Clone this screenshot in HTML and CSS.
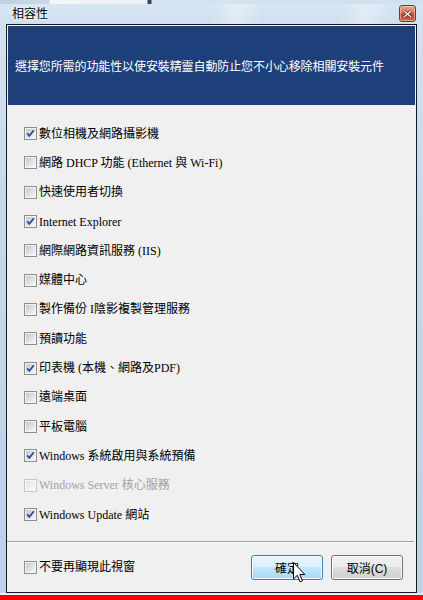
FILE: index.html
```html
<!DOCTYPE html>
<html lang="zh-Hant">
<head>
<meta charset="utf-8">
<title>相容性</title>
<link rel="stylesheet" href="styles.css">
</head>
<body>
<svg class="defs" width="0" height="0" aria-hidden="true">
  <defs>
    <linearGradient id="cbfill" x1="0" y1="0" x2="1" y2="1">
      <stop offset="0" stop-color="#c3c7cd"/>
      <stop offset="1" stop-color="#f8f8f8"/>
    </linearGradient>
    <linearGradient id="cbfilld" x1="0" y1="0" x2="1" y2="1">
      <stop offset="0" stop-color="#e6e6e6"/>
      <stop offset="1" stop-color="#f7f7f7"/>
    </linearGradient>
    <symbol id="box" viewBox="0 0 13 13">
      <rect x="0.5" y="0.5" width="12" height="12" fill="#f4f4f4" stroke="#8e8f8f"/>
      <rect x="2" y="2" width="9" height="9" fill="url(#cbfill)"/>
    </symbol>
    <symbol id="boxd" viewBox="0 0 13 13">
      <rect x="0.5" y="0.5" width="12" height="12" fill="#f7f7f7" stroke="#c8c8c8"/>
      <rect x="2" y="2" width="9" height="9" fill="url(#cbfilld)"/>
    </symbol>
    <symbol id="tick" viewBox="0 0 13 13">
      <path d="M3.2 6.3 L5.4 8.9 L9.8 3.3" fill="none" stroke="#2d4c95" stroke-width="1.8"/>
    </symbol>
  </defs>
</svg>

<div class="window">
  <div class="behind"></div>
  <div class="titlebar">
    <span class="title">相容性</span>
    <span class="close">
      <svg width="9" height="8" viewBox="0 0 9 8"><path d="M1 1 L8 7 M8 1 L1 7" stroke="#3a1a12" stroke-width="2.6"/><path d="M1 1 L8 7 M8 1 L1 7" stroke="#ffffff" stroke-width="1.4"/></svg>
    </span>
  </div>

  <div class="client">
    <div class="banner">選擇您所需的功能性以使安裝精靈自動防止您不小心移除相關安裝元件</div>

    <ul class="list">
      <li class="row"><svg class="cb"><use href="#box"/><use href="#tick"/></svg><span>數位相機及網路攝影機</span></li>
      <li class="row"><svg class="cb"><use href="#box"/></svg><span>網路 DHCP 功能 (Ethernet 與 Wi-Fi)</span></li>
      <li class="row"><svg class="cb"><use href="#box"/></svg><span>快速使用者切換</span></li>
      <li class="row"><svg class="cb"><use href="#box"/><use href="#tick"/></svg><span>Internet Explorer</span></li>
      <li class="row"><svg class="cb"><use href="#box"/></svg><span>網際網路資訊服務 (IIS)</span></li>
      <li class="row"><svg class="cb"><use href="#box"/></svg><span>媒體中心</span></li>
      <li class="row"><svg class="cb"><use href="#box"/></svg><span>製作備份 I陰影複製管理服務</span></li>
      <li class="row"><svg class="cb"><use href="#box"/></svg><span>預讀功能</span></li>
      <li class="row"><svg class="cb"><use href="#box"/><use href="#tick"/></svg><span>印表機 (本機、網路及PDF)</span></li>
      <li class="row"><svg class="cb"><use href="#box"/></svg><span>遠端桌面</span></li>
      <li class="row"><svg class="cb"><use href="#box"/></svg><span>平板電腦</span></li>
      <li class="row"><svg class="cb"><use href="#box"/><use href="#tick"/></svg><span>Windows 系統啟用與系統預備</span></li>
      <li class="row disabled"><svg class="cb"><use href="#boxd"/></svg><span>Windows Server 核心服務</span></li>
      <li class="row"><svg class="cb"><use href="#box"/><use href="#tick"/></svg><span>Windows Update 網站</span></li>
    </ul>

    <div class="sep"></div>

    <div class="footer">
      <label class="row foot-check"><svg class="cb"><use href="#box"/></svg><span>不要再顯現此視窗</span></label>
      <div class="buttons">
        <button class="btn hot">確定
          <svg class="cursor" width="13" height="22" viewBox="0 0 13 22"><path d="M0.5 0.5 L0.5 17 L4.3 13.3 L7 19.8 L9.4 18.8 L6.8 12.5 L11.8 12.5 Z" fill="#ffffff" stroke="#000000" stroke-width="1" stroke-linejoin="miter"/></svg>
        </button>
        <button class="btn">取消(C)</button>
      </div>
    </div>
  </div>

  <div class="bottomframe"></div>
  <div class="redbar"></div>
</div>
</body>
</html>
```

FILE: styles.css
```css
html, body {
  margin: 0;
  padding: 0;
}

body {
  width: 423px;
  height: 600px;
  overflow: hidden;
  font-family: "Liberation Serif", "Noto Sans CJK TC", serif;
  font-size: 12px;
}

.defs {
  display: block;
  width: 0;
  height: 0;
  overflow: hidden;
}

.window {
  width: 423px;
  height: 600px;
  display: flex;
  flex-direction: column;
  background: linear-gradient(180deg, #d3e2f1 0%, #c4d8ec 40%, #bcd2e9 100%);
  box-sizing: border-box;
}

.behind {
  height: 4px;
  flex: none;
  background: linear-gradient(90deg,
    #bfd1e2 0px, #c9d9e8 49px,
    #f3f5f7 50px, #eef1f4 147px,
    #3c4650 148px, #3c4650 151px,
    #d6e4f1 152px, #d0e0ef 100%);
}

.titlebar {
  height: 20px;
  flex: none;
  display: flex;
  align-items: flex-start;
  justify-content: space-between;
  padding: 0 7px 0 12px;
  background:
    linear-gradient(100deg, rgba(255,255,255,0) 50%, rgba(255,255,255,0.35) 56%, rgba(255,255,255,0) 62%, rgba(255,255,255,0) 80%, rgba(255,255,255,0.3) 86%, rgba(255,255,255,0) 92%),
    linear-gradient(180deg, #d8e6f3 0%, #cfdfef 100%);
}

.title {
  font-family: "Noto Sans CJK TC", sans-serif;
  font-size: 12px;
  line-height: 16px;
  margin-top: 1px;
  color: #000;
  text-shadow: 0 0 4px #ffffff, 0 0 2px #ffffff;
}

.close {
  width: 17px;
  height: 17px;
  margin-top: 1px;
  box-sizing: border-box;
  border: 1px solid #7b3324;
  border-radius: 3px;
  background: linear-gradient(180deg, #e9a592 0%, #d8755d 45%, #c1432a 55%, #d2654a 100%);
  box-shadow: inset 0 0 0 1px rgba(255,220,210,0.5);
  display: flex;
  align-items: center;
  justify-content: center;
}

.client {
  height: 569px;
  flex: none;
  margin: 0 6px;
  box-sizing: border-box;
  border: 1px solid #1a1a1a;
  background: #f0f0f0;
  display: flex;
  flex-direction: column;
}

.banner {
  height: 79px;
  flex: none;
  margin: 1px 1px 0 1px;
  background: #1d3f7a;
  color: #ffffff;
  padding-left: 7px;
  display: flex;
  align-items: center;
  font-size: 12px;
  letter-spacing: -0.1px;
}

.list {
  list-style: none;
  margin: 0;
  padding: 14px 0 0 17px;
  flex: none;
}

.row {
  height: 29.3px;
  display: flex;
  align-items: center;
  color: #000;
}

.row span {
  margin-left: 2px;
  line-height: 14px;
  white-space: nowrap;
}

.row.disabled span {
  color: #a3a3a3;
}

.cb {
  width: 13px;
  height: 13px;
  flex: none;
}

.sep {
  flex: none;
  height: 1px;
  margin: 11.8px 2px 0 0;
  background: #a0a0a0;
  border-bottom: 1px solid #ffffff;
}

.footer {
  flex: 1;
  display: flex;
  align-items: center;
  justify-content: space-between;
  padding: 0 13px 0 17px;
}

.foot-check {
  height: auto;
}

.buttons {
  display: flex;
  gap: 8px;
}

.btn {
  position: relative;
  width: 72px;
  height: 25px;
  padding: 0;
  box-sizing: border-box;
  border: 1px solid #707070;
  border-radius: 3px;
  background: linear-gradient(180deg, #f2f2f2 0%, #ebebeb 50%, #dddddd 50%, #cfcfcf 100%);
  box-shadow: inset 0 0 0 1px #fbfbfb;
  font-family: "Liberation Sans", "Noto Sans CJK TC", sans-serif;
  font-size: 12px;
  color: #000;
}

.btn.hot {
  border-color: #3c7fb1;
  background: linear-gradient(180deg, #eaf6fd 0%, #d9f0fc 50%, #bee6fd 50%, #a7d9f5 100%);
  box-shadow: inset 0 0 0 1px #f3fbff;
}

.cursor {
  position: absolute;
  left: 41px;
  top: 6px;
}

.bottomframe {
  height: 2px;
  flex: none;
  background: #e6edf5;
}

.redbar {
  height: 5px;
  flex: none;
  background: #ff0000;
}
```
